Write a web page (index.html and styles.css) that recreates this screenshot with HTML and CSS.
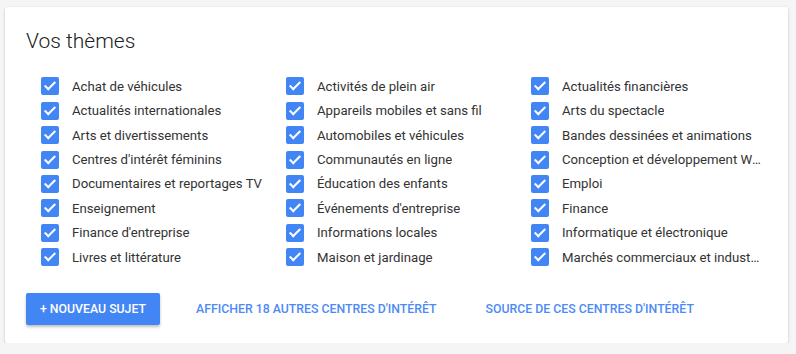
FILE: index.html
```html
<!DOCTYPE html>
<html lang="fr">
<head>
  <meta charset="UTF-8"/>
  <title>Vos thèmes</title>
  <link rel="stylesheet" href="styles.css">
</head>
<body>
  <div class="card">
    <h1>Vos thèmes</h1>

    <div class="topics">
      <div class="topic"><span class="check"></span><span class="name">Achat de véhicules</span></div>
      <div class="topic"><span class="check"></span><span class="name">Activités de plein air</span></div>
      <div class="topic"><span class="check"></span><span class="name">Actualités financières</span></div>
      <div class="topic"><span class="check"></span><span class="name">Actualités internationales</span></div>
      <div class="topic"><span class="check"></span><span class="name">Appareils mobiles et sans fil</span></div>
      <div class="topic"><span class="check"></span><span class="name">Arts du spectacle</span></div>
      <div class="topic"><span class="check"></span><span class="name">Arts et divertissements</span></div>
      <div class="topic"><span class="check"></span><span class="name">Automobiles et véhicules</span></div>
      <div class="topic"><span class="check"></span><span class="name">Bandes dessinées et animations</span></div>
      <div class="topic"><span class="check"></span><span class="name">Centres d'intérêt féminins</span></div>
      <div class="topic"><span class="check"></span><span class="name">Communautés en ligne</span></div>
      <div class="topic"><span class="check"></span><span class="name">Conception et développement Web</span></div>
      <div class="topic"><span class="check"></span><span class="name">Documentaires et reportages TV</span></div>
      <div class="topic"><span class="check"></span><span class="name">Éducation des enfants</span></div>
      <div class="topic"><span class="check"></span><span class="name">Emploi</span></div>
      <div class="topic"><span class="check"></span><span class="name">Enseignement</span></div>
      <div class="topic"><span class="check"></span><span class="name">Événements d'entreprise</span></div>
      <div class="topic"><span class="check"></span><span class="name">Finance</span></div>
      <div class="topic"><span class="check"></span><span class="name">Finance d'entreprise</span></div>
      <div class="topic"><span class="check"></span><span class="name">Informations locales</span></div>
      <div class="topic"><span class="check"></span><span class="name">Informatique et électronique</span></div>
      <div class="topic"><span class="check"></span><span class="name">Livres et littérature</span></div>
      <div class="topic"><span class="check"></span><span class="name">Maison et jardinage</span></div>
      <div class="topic"><span class="check"></span><span class="name">Marchés commerciaux et industriels</span></div>
    </div>

    <div class="actions">
      <button class="btn-primary">+ Nouveau sujet</button>
      <a class="link" href="#">Afficher 18 autres centres d'intérêt</a>
      <a class="link" href="#">Source de ces centres d'intérêt</a>
    </div>
  </div>
</body>
</html>
```

FILE: styles.css
```css
body {
  font-family: Roboto, "Liberation Sans", sans-serif;
  background-color: #f5f5f5;
  margin: 0;
  padding: 7px 8px 0 5px;
}

.card {
  width: 783px;
  height: 336px;
  box-sizing: border-box;
  background-color: #ffffff;
  border-radius: 2px;
  box-shadow: 0 1px 3px rgba(0, 0, 0, 0.2);
  padding: 20px 26px 0 21px;
}

h1 {
  margin: 0;
  font-size: 21px;
  font-weight: 300;
  line-height: 28px;
  color: #212121;
}

.topics {
  display: grid;
  grid-template-columns: 245px 245px 1fr;
  grid-auto-rows: 24.45px;
  margin-top: 19px;
  padding-left: 15px;
}

.topic {
  display: flex;
  align-items: center;
  min-width: 0;
}

.check {
  flex: none;
  position: relative;
  width: 18px;
  height: 18px;
  border-radius: 2px;
  background-color: #4285f4;
  margin-right: 13px;
}

.check::after {
  content: "";
  position: absolute;
  left: 6px;
  top: 2px;
  width: 4px;
  height: 9px;
  border: solid #ffffff;
  border-width: 0 2px 2px 0;
  transform: rotate(45deg);
}

.name {
  font-size: 13.2px;
  color: #333333;
  white-space: nowrap;
  overflow: hidden;
  text-overflow: ellipsis;
}

.actions {
  display: flex;
  align-items: center;
  margin-top: 23px;
  white-space: nowrap;
}

.btn-primary {
  width: 134px;
  height: 32px;
  border: none;
  border-radius: 2px;
  background-color: #4285f4;
  color: #ffffff;
  font-family: inherit;
  font-size: 12.3px;
  font-weight: 500;
  text-transform: uppercase;
  box-shadow: 0 2px 3px rgba(0, 0, 0, 0.25);
  padding: 0;
  margin-right: 36px;
}

.link {
  font-size: 12.3px;
  font-weight: 500;
  color: #4d8af5;
  text-decoration: none;
  text-transform: uppercase;
  margin-right: 49px;
}
```
